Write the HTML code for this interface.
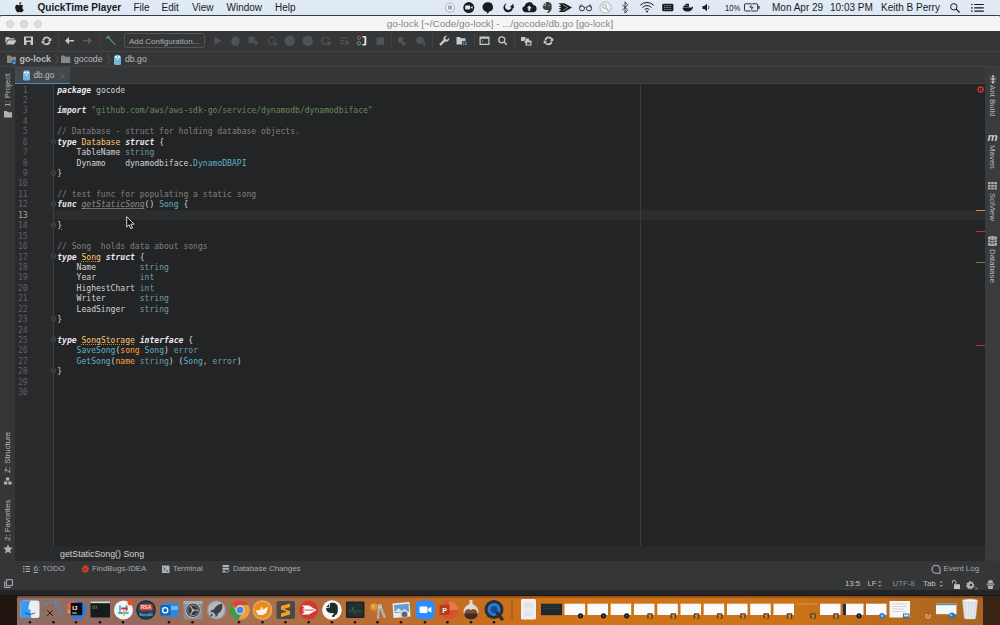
<!DOCTYPE html>
<html>
<head>
<meta charset="utf-8">
<title>go-lock</title>
<style>
*{box-sizing:border-box;margin:0;padding:0}
html,body{width:1000px;height:625px;overflow:hidden;background:#2a1a12;font-family:"Liberation Sans",sans-serif;}
.abs{position:absolute}
#root{position:relative;width:1000px;height:625px;overflow:hidden;background:#2a1a12}
/* mac menu bar */
#menubar{left:0;top:0;width:1000px;height:15px;background:linear-gradient(#e2ecf6,#dce8f3);color:#1a1a1a;font-size:10px;line-height:15px;white-space:nowrap}
#menubar span{position:absolute;top:0}
/* window */
#win{left:0;top:15px;width:1000px;height:575px;background:#343638;border-radius:3px 3px 4px 4px;overflow:hidden}
#titlebar{left:0;top:0;width:1000px;height:16px;background:#f5f5f5;border-top:1px solid #3a3a3a;color:#858585;font-size:9.9px;line-height:16px;text-align:center}
.tl{position:absolute;top:3.5px;width:8px;height:8px;border-radius:50%;background:#dcdcdc;border:0.5px solid #d0d0d0}
#toolbar{left:0;top:16px;width:1000px;height:21px;background:#343638;border-bottom:1px solid #3f4143}
#navbar{left:0;top:37px;width:1000px;height:15px;background:#343638;color:#bbbbbb;font-size:8.7px;line-height:14px;white-space:nowrap}
#tabbar{left:14px;top:51px;width:972px;height:18px;background:#343638;border-top:1px solid #3f4143;border-bottom:1px solid #3f4143}
#tab{left:0;top:0;width:56px;height:16.5px;background:#45484a;border-bottom:1.5px solid #4a88c7;color:#bbbbbb;font-size:8.3px;line-height:17px}
#leftbar{left:0;top:51px;width:15px;height:510px;background:#343638;border-top:1px solid #3f4143}
#rightbar{left:985px;top:51px;width:15px;height:510px;background:#393b3d;border-top:1px solid #3f4143}
.vlabel{position:absolute;color:#bbbbbb;font-size:7.9px;white-space:nowrap;line-height:10px;height:10px}
.vl{transform-origin:0 0;transform:rotate(-90deg)}
.vr{transform-origin:0 0;transform:rotate(90deg)}
/* editor */
#editor{left:15px;top:68.5px;width:970px;height:462.5px;background:#232425}
#gutter{left:0;top:0;width:39px;height:463px;background:#292a2c;border-right:1px solid #3d3e40}
#code{left:42.2px;top:2.0px;font-family:"DejaVu Sans Mono","Liberation Mono",monospace;font-size:8.07px;line-height:10.43px;color:#d0d4d8;white-space:pre}
#lnums{left:0;top:2.0px;width:12.6px;text-align:right;font-family:"DejaVu Sans Mono","Liberation Mono",monospace;font-size:8.07px;line-height:10.43px;color:#5e6164;white-space:pre}
.k{font-weight:bold;font-style:italic;color:#ebe4f2}
.s{color:#6a8759}
.c{color:#808080}
.t{color:#6d9caa}
.t2{color:#5fb0c8}
.m{color:#5fb0c8}
.e{text-decoration:underline dotted #e0452e;text-decoration-thickness:0.9px;text-underline-offset:0.8px}
.d{color:#ffc66d}
.f{color:#a9b7c6}
.p{color:#ffa040}
.u{font-style:italic;color:#8c8c8c;text-decoration:underline #707070;text-decoration-thickness:0.6px;text-underline-offset:1px}
.w{text-decoration:underline dotted #c08a30;text-decoration-thickness:0.9px;text-underline-offset:0.8px}
#curline{left:39px;top:126.0px;width:931px;height:10.4px;background:#2b2c2d}
#margin{left:625px;top:0;width:1px;height:463px;background:#3a3b3c}
/* bottom */
#crumb{left:15px;top:531px;width:970px;height:15px;background:#292a2c;color:#d0d0d0;font-size:8.86px;line-height:14px;padding-left:45px;padding-top:1px}
#toolwin{left:0;top:546px;width:1000px;height:15px;background:#343638;border-top:1px solid #343638;color:#a9abad;font-size:7.9px;line-height:14px;white-space:nowrap}
#toolwin span,#status span{position:absolute;top:0}
#status{left:0;top:561px;width:1000px;height:14px;background:#343638;border-top:1px solid #343638;color:#c2c4c6;font-size:7.8px;line-height:14px;white-space:nowrap}
/* dock */
#dock{left:17px;top:595.5px;width:965.5px;height:30px;background:#cc7218;border-radius:3px 3px 0 0;overflow:hidden}
.ic{position:absolute;top:3px;width:20px;height:20px;border-radius:4px}
.dot{position:absolute;top:26px;width:2px;height:2px;border-radius:50%;background:#1a1a1a}
</style>
</head>
<body>
<div id="root">
<div class="abs" style="left:0;top:588px;width:1000px;height:37px;background:#1a1412"></div>
<div class="abs" style="left:0;top:588px;width:1000px;height:6.500px;background:#242527"></div>
<div class="abs" style="left:0;top:596px;width:18px;height:29px;background:#21150f"></div>
<div class="abs" style="left:982px;top:596px;width:18px;height:29px;background:#3a2416"></div>

<div id="menubar" class="abs">
<svg class="abs" style="left:15px;top:2px" width="9" height="11" viewBox="0 0 18 22"><path fill="#1a1a1a" d="M12.6 0c.1 1.2-.4 2.400-1.100 3.300-.8.900-2 1.600-3.100 1.500-.1-1.200.5-2.400 1.100-3.100C10.300.800 11.600.100 12.600 0zM16.900 7.500c-.1.100-2.200 1.300-2.200 3.800 0 3 2.600 4 2.700 4-.0.100-.4 1.500-1.400 2.900-.9 1.300-1.800 2.500-3.200 2.500s-1.800-.8-3.400-.8c-1.600 0-2.100.8-3.400.8-1.400.1-2.400-1.300-3.300-2.600C.900 15.500-.4 11.000.8 8.100c.9-1.600 2.500-2.600 4.200-2.600 1.300 0 2.600.9 3.400.9.800 0 2.300-1.100 3.900-.9.700 0 2.500.3 3.700 2z"/></svg>
<span style="left:37.5px;font-weight:bold;font-size:10px">QuickTime Player</span>
<span style="left:133.5px">File</span>
<span style="left:161.5px">Edit</span>
<span style="left:192px">View</span>
<span style="left:226.5px">Window</span>
<span style="left:275px">Help</span>
<!-- status icons -->
<svg class="abs" style="left:440px;top:0" width="330" height="15" viewBox="440 0 330 15">
 <circle cx="450" cy="7.600" r="4.600" fill="#eef3f8" stroke="#a9adb2" stroke-width="0.900"/><rect x="448" y="5.600" width="4" height="4" rx="0.700" fill="#a4a8ad"/>
 <circle cx="468.800" cy="7.600" r="5.500" fill="#1c1c1e"/><rect x="465.200" y="5.600" width="5" height="4" rx="0.800" fill="#dfeaf4"/><path d="M470.600 7.600l2-1.500v3z" fill="#dfeaf4"/>
 <path d="M487.800 2.300a5 4.800 0 0 1 1.200 9.500c-.3 1-1.200 1.700-2.400 1.900.5-.6.600-1.200.5-1.800a5 4.800 0 0 1 .7-9.600z" fill="#1c1c1e"/>
 <path d="M505.85 3.43A4.7 4.7 0 1 0 512.88 7.09L511.6 6.6A3.3 3.3 0 1 1 506.65 3.74z" fill="#1c1c1e"/><path d="M509.9 7l3.300-3.200.9 4.500z" fill="#1c1c1e"/>
 <path d="M525.5 12.2a3.200 3.200 0 0 1-.7-6.300 4.500 4.500 0 0 1 8.600-1 3.700 3.700 0 0 1 .2 7.300z" fill="#1c1c1e"/><path d="M529.3 5.600l2.500 2.700h-1.500v2.400h-2V8.300h-1.500z" fill="#dfeaf4"/>
 <path d="M545.6 2.4C547 1.9 549.5 2 550.3 2.9C551.6 3.2 551.7 5 551.7 7C551.7 9.5 551.2 11.2 549.8 11.4C549.3 12.6 548.6 13.2 547.6 12.9C546.9 12.6 547.2 11.6 547.9 11.5C548.4 11.4 548.6 10.6 548.3 10C546 10.4 543.3 9.6 542.7 7.200C542.5 6.2 543 5.8 543.6 5.8L545 5.8C545.4 5.8 545.6 5.5 545.6 5z" fill="#3e4042"/><path d="M542.8 5.2L545 2.9V5.2z" fill="#3e4042"/><circle cx="549" cy="5.400" r="0.500" fill="#dfeaf4"/>
 <path d="M558.4 3.300h6l7.600 4.300-7.600 4.300h-6l3-2.150-3-.65 2.800-1.500-2.800-1.500 3-.65z" fill="#1c1c1e"/><path d="M563 4.600l4.600 3-4.600 3" fill="none" stroke="#dfeaf4" stroke-width="0.500"/>
 <circle cx="582" cy="8.400" r="2.500" fill="none" stroke="#1c1c1e" stroke-width="0.900"/><circle cx="589" cy="8.400" r="2.500" fill="none" stroke="#1c1c1e" stroke-width="0.900"/><path d="M584.500 7.800q1-.9 2 0M579.600 7.600l.9-2.600 1.200-.4M591.400 7.600l-.9-2.600-1.200-.4" fill="none" stroke="#1c1c1e" stroke-width="0.700"/>
 <circle cx="605.5" cy="7.600" r="5.600" fill="#eef3f7" stroke="#a9adb1" stroke-width="0.900"/><circle cx="604.3" cy="6.300" r="1.900" fill="none" stroke="#a4a8ac" stroke-width="0.900"/><path d="M605.7 7.800l3 3.100" stroke="#a4a8ac" stroke-width="1.100"/>
 <path d="M622.3 4.600l5.400 5.600-2.700 2.900V1.900l2.700 2.900-5.400 5.600" fill="none" stroke="#1c1c1e" stroke-width="0.800"/>
 <path d="M640.2 5.300a9.600 9.600 0 0 1 13.600 0M642.400 7.500a6.500 6.500 0 0 1 9.200 0M644.600 9.600a3.400 3.400 0 0 1 4.800 0" fill="none" stroke="#1c1c1e" stroke-width="1"/><circle cx="647" cy="11.500" r="1" fill="#1c1c1e"/>
 <rect x="662.200" y="3.800" width="11.200" height="7.400" rx="1.300" fill="#1c1c1e"/><path d="M664 5.500h7.600M664 7.500h7.600M664 9.500h7.600" stroke="#9aa0a6" stroke-width="0.800" stroke-dasharray="1 0.500"/>
 <path d="M682.500 7.500h8.500c.6-.1 1.300-.4 1.800-1 .4.300.4.800 0 1.400-.9 2.600-3 3.700-5.800 3.700-2.600 0-4.200-1.300-4.500-4.100z" fill="#1c1c1e"/><path d="M683.500 5.500h5.500v1.800h-5.500zM685.500 3.700h3.500v1.600h-3.500z" fill="#1c1c1e"/>
 <path d="M702.500 6h1.800l2.700-2.300v7.600l-2.700-2.300h-1.800z" fill="#1c1c1e"/><path d="M708.300 5.700q1.300 1.800 0 3.600" fill="none" stroke="#1c1c1e" stroke-width="0.800"/>
 <rect x="744.500" y="3.800" width="13.200" height="7.200" rx="1.200" fill="none" stroke="#1c1c1e" stroke-width="0.900"/><rect x="758.300" y="6" width="1.200" height="2.800" fill="#1c1c1e"/><path d="M752 3l-3 4.800h2.300l-.8 4.200 3.300-5.200h-2.300z" fill="#1c1c1e" stroke="#dfeaf4" stroke-width="0.500"/>
</svg>
<span style="left:724.500px;font-size:9.500px;transform:scaleX(0.8);transform-origin:0 50%">10%</span>
<span style="left:772px">Mon Apr 29</span>
<span style="left:830px">10:03 PM</span>
<span style="left:881px">Keith B Perry</span>
<svg class="abs" style="left:949px;top:2px" width="12" height="12" viewBox="0 0 12 12"><circle cx="4.800" cy="4.800" r="3.200" fill="none" stroke="#1a1a1a" stroke-width="1"/><path d="M7.200 7.200l3.300 3.300" stroke="#1a1a1a" stroke-width="1.200"/></svg>
<svg class="abs" style="left:971px;top:3px" width="13" height="10" viewBox="0 0 13 10"><path d="M0 1.500h1.600M3.300 1.500h9.500M0 4.800h1.600M3.300 4.800h9.500M0 8.100h1.600M3.300 8.100h9.500" stroke="#1a1a1a" stroke-width="1.200"/></svg>
</div>

<div id="win" class="abs">
<div id="titlebar" class="abs"><div class="tl" style="left:5.500px"></div><div class="tl" style="left:19.500px"></div><div class="tl" style="left:33.500px"></div>go-lock [~/Code/go-lock] - .../gocode/db.go [go-lock]</div>
<div id="toolbar" class="abs">
<svg class="abs" style="left:0;top:-0.700px" width="600" height="20" viewBox="0 0 600 20">
 <g fill="#c6c8ca" stroke="none">
  <!-- open folder -->
  <path d="M5.500 7h3.500l1 1.200h4.500v1.300H8l-2.500 4z"/><path d="M8.500 10.200h8l-2.600 4.300H5.800z"/>
  <!-- save -->
  <path d="M24 6.500h9v8.500h-9z M26 7.800v2.700h5V7.800z M26.500 12v3h4v-3z" fill-rule="evenodd"/>
  <!-- refresh -->
  <path d="M46.500 6.500a4.300 4.300 0 0 1 3.800 2.200l1-1v3.300h-3.300l1.200-1.200a2.700 2.700 0 0 0-5 .4h-1.700a4.300 4.300 0 0 1 4-3.700z M46.500 15.300a4.300 4.300 0 0 1-3.800-2.200l-1 1v-3.300H45l-1.200 1.200a2.700 2.700 0 0 0 5-.4h1.700a4.300 4.300 0 0 1-4 3.700z"/>
  <!-- back -->
  <path d="M65 10.800l4-3.800v3h5v1.600h-5v3z"/>
  <!-- wrench -->
  <path d="M447.300 5.800a3.100 3.100 0 0 0-3.800 4l-4.300 4.400 1.600 1.600 4.400-4.300a3.100 3.100 0 0 0 4-3.800l-2 2-1.600-.5-.4-1.500z"/>
  <!-- project structure -->
  <path d="M456.500 7h3.300l1 1.200h4.700v6.300h-9z"/><path d="M462 11h5v4.500h-5z" fill="#343638"/><path d="M462.800 11.700h1.500v1.300h-1.500zM465 11.700h1.500v1.300H465zM462.800 13.600h1.500v1.300h-1.500zM465 13.600h1.500v1.300H465z" fill="#4a9ee0"/>
  <!-- terminal window -->
  <path d="M479.500 6.500h10v8.500h-10z M480.700 8.800v5h7.600v-5z" fill-rule="evenodd"/><path d="M481.500 9.800l1.500 1.200-1.500 1.200" stroke="#6fae6b" stroke-width="0.700" fill="none"/>
  <!-- vcs -->
  <path d="M521 7h4.500v4H521z M526 8.500h3v2h2.500v5h-6v-3h-1v-2.500h1.500z M527 12.500v2h3.300v-2z" fill-rule="evenodd"/>
  <!-- refresh2 -->
  <path d="M548.500 6.500a4.300 4.300 0 0 1 3.800 2.200l1-1v3.300H550l1.200-1.200a2.700 2.700 0 0 0-5 .4h-1.700a4.300 4.300 0 0 1 4-3.700z M548.500 15.300a4.300 4.300 0 0 1-3.800-2.200l-1 1v-3.300h3.300l-1.200 1.200a2.700 2.700 0 0 0 5-.4h1.700a4.300 4.300 0 0 1-4 3.700z"/>
 </g>
 <!-- search -->
 <circle cx="501.800" cy="9.800" r="3" fill="none" stroke="#c6c8ca" stroke-width="1.300"/><path d="M504 12l2.800 2.800" stroke="#c6c8ca" stroke-width="1.500"/>
 <!-- forward dim -->
 <path d="M92 10.800l-4-3.800v3h-5v1.600h5v3z" fill="#585b5d"/>
 <!-- hammer -->
 <path d="M105.500 7.800l3-2.300 1.800 1.300-.9.700 6.300 7-1 .8-6.300-7-.9.700z" fill="#4a9472"/>
 <!-- separators -->
 <path d="M58.500 4v13M99.500 4v13M391.500 4v13M432.500 4v13M474.500 4v13M514.500 4v13M537.500 4v13" stroke="#404244" stroke-width="1"/>
 <!-- config box -->
 <rect x="124.500" y="3.500" width="80" height="14" rx="2" fill="none" stroke="#525456" stroke-width="1"/>
 <!-- dim icons -->
 <g fill="#505355">
  <path d="M214.500 6.500l7 4.300-7 4.300z"/>
  <path d="M232 9.500a3.500 3 0 0 1 7 0v4a3.500 2.500 0 0 1-7 0z M233.500 6.500h4v2h-4z M230.500 9.500h10v1h-10zM230.500 12h10v1h-10z"/>
  <path d="M248.500 6.500h6v6.500h-6z M255 10l4 2.800-4 2.800z"/>
  <path d="M272 6.500a4.300 4.300 0 1 0 1 8.500l-.5-1.300a3 3 0 1 1 2.500-2.700h1.300a4.300 4.300 0 0 0-4.300-4.500z M272.500 9.500l5 5.500-2 .2-1 1.600z"/>
  <circle cx="289.700" cy="10.800" r="5.200"/>
  <circle cx="307.700" cy="10.800" r="5.200"/>
  <path d="M325.500 6.500a4.300 4.300 0 1 0 1.500 8.300v-1.500a3 3 0 1 1 1.500-3.500h1.300a4.300 4.300 0 0 0-4.300-3.300z M327.500 10.500l4.500 2.700-4.500 2.700z"/>
  <path d="M340 7h8v1.200h-8zM340 10h4.500v1.200H340zM340 13h4.500v1.200H340zM345.500 10l4.300 2.700-4.300 2.700z"/>
  <path d="M376.500 7.300h7.500v7.500h-7.500z"/>
  <path d="M398 7h5v6h-5zM402 12h3.500v3.500H402z M404 10.500l3 2"/>
  <path d="M420 6.500a3.800 3.800 0 1 0 .1 7.600 3.800 3.800 0 0 0-.1-7.600z M423.500 11.500h1.500v3h1.500l-2.200 2.200-2.200-2.200h1.400z"/>
 </g>
 <!-- attach icon -->
 <circle cx="359" cy="7.800" r="1.600" fill="none" stroke="#d25252" stroke-width="0.900"/><circle cx="359" cy="13.300" r="1.700" fill="none" stroke="#59a869" stroke-width="0.900"/>
 <path d="M362.500 6h2.500a1.300 1.300 0 0 1 1.300 1.300v7a1.300 1.300 0 0 1-1.300 1.300h-2.500v-1.500h2v-6.600h-2z" fill="#e8e8e8"/>
</svg>
<div class="abs" style="left:129px;top:3.500px;font-size:7.950px;line-height:14px;color:#adafb1;white-space:nowrap">Add Configuration...</div>
</div>
<div id="navbar" class="abs">
 <svg class="abs" style="left:0;top:0" width="160" height="15" viewBox="0 0 160 15">
  <path d="M7 3.500h3.300l1 1.200h4.700v6.300H7z" fill="#84888b"/><rect x="12" y="8.500" width="4" height="4" fill="#343638"/><rect x="12.700" y="9.200" width="3" height="3" fill="#3d9be9"/>
  <path d="M61 3.500h3.300l1 1.200h5v6.300H61z" fill="#84888b"/>
  <path d="M55 2l3 5.500-3 5.500M107 2l3 5.500-3 5.500" fill="none" stroke="#55585a" stroke-width="0.800"/>
  <g transform="translate(114,2.500)"><path d="M3.500 0.300a3.500 3.200 0 0 1 3.500 3.200v5.500a1.500 1.500 0 0 1-1.500 1.500h-4a1.500 1.500 0 0 1-1.500-1.500v-5.500a3.500 3.200 0 0 1 3.500-3.200z" fill="#74b4dc"/><circle cx="2" cy="2.500" r="1.100" fill="#fff"/><circle cx="5" cy="2.500" r="1.100" fill="#fff"/><rect x="2.700" y="4" width="1.600" height="1.500" fill="#eee"/></g>
 </svg>
 <span class="abs" style="left:19.500px;top:0;font-weight:bold;font-size:8.900px">go-lock</span>
 <span class="abs" style="left:74px;top:0">gocode</span>
 <span class="abs" style="left:125px;top:0">db.go</span>
</div>
<div id="tabbar" class="abs">
 <div id="tab" class="abs">
  <svg class="abs" style="left:8.500px;top:3px" width="7" height="11" viewBox="0 0 7 11"><path d="M3.500 0.300a3.500 3.200 0 0 1 3.500 3.200v5.500a1.500 1.500 0 0 1-1.500 1.500h-4a1.500 1.500 0 0 1-1.500-1.500v-5.500a3.500 3.200 0 0 1 3.500-3.200z" fill="#74b4dc"/><circle cx="2" cy="2.500" r="1.100" fill="#fff"/><circle cx="5" cy="2.500" r="1.100" fill="#fff"/><rect x="2.700" y="4" width="1.600" height="1.500" fill="#eee"/></svg>
  <span class="abs" style="left:19.500px;top:0">db.go</span>
  <svg class="abs" style="left:46px;top:6.500px" width="5" height="5" viewBox="0 0 5 5"><path d="M0.500 0.500l4 4M4.500 0.500l-4 4" stroke="#6e7173" stroke-width="0.800"/></svg>
 </div>
</div>
<div id="editor" class="abs">
 <div id="curline" class="abs"></div>
 <div id="margin" class="abs"></div>
 <div id="gutter" class="abs"></div>
 <div id="lnums" class="abs">1
2
3
4
5
6
7
8
9
10
11
12
<span style="color:#a6a8aa">13</span>
14
15
16
17
18
19
20
21
22
23
24
25
26
27
28
29
30</div>
 <div id="code" class="abs"><span class="k">package</span> gocode

<span class="k">import</span> <span class="s">"github.com/aws/aws-sdk-go/service/dynamodb/dynamodbiface"</span>

<span class="c">// Database - struct for holding database objects.</span>
<span class="k">type</span> <span class="d">Database</span> <span class="k">struct</span> {
    TableName <span class="t">string</span>
    Dynamo    dynamodbiface.<span class="t2">DynamoDBAPI</span>
}

<span class="c">// test func for populating a static song</span>
<span class="k">func</span> <span class="u">getStaticSong</span>() <span class="t2">Song</span> {

<span class="e">}</span>

<span class="c">// Song  holds data about songs</span>
<span class="k">type</span> <span class="d w">Song</span> <span class="k">struct</span> {
    Name         <span class="t">string</span>
    Year         <span class="t">int</span>
    HighestChart <span class="t">int</span>
    Writer       <span class="t">string</span>
    LeadSinger   <span class="t">string</span>
}

<span class="k">type</span> <span class="d w">SongStorage</span> <span class="k">interface</span> {
    <span class="m">SaveSong</span>(<span class="p">song</span> <span class="t2">Song</span>) <span class="t">error</span>
    <span class="m">GetSong</span>(<span class="p">name</span> <span class="t">string</span>) (<span class="t2">Song</span><span class="p">,</span> <span class="t">error</span>)
}
</div>
 <svg class="abs" style="left:33.700px;top:-1.200px" width="10" height="320" viewBox="0 0 10 320">
  <g fill="#232425" stroke="#53565a" stroke-width="0.700"><circle cx="4.500" cy="59.8" r="2.300"/><circle cx="4.500" cy="91.0" r="2.300"/><circle cx="4.500" cy="122.2" r="2.300"/><circle cx="4.500" cy="143.0" r="2.300"/><circle cx="4.500" cy="174.2" r="2.300"/><circle cx="4.500" cy="236.6" r="2.300"/><circle cx="4.500" cy="257.4" r="2.300"/><circle cx="4.500" cy="288.6" r="2.300"/></g>
  <path d="M3.300 59.8h2.400M3.300 91.0h2.400M3.300 122.2h2.400M3.300 143.0h2.400M3.300 174.2h2.400M3.300 236.6h2.400M3.300 257.4h2.400M3.300 288.6h2.400" stroke="#7a7d80" stroke-width="0.600"/>
 </svg>
 <!-- error stripe marks -->
 <div class="abs" style="left:960.5px;top:126.2px;width:9.5px;height:1.5px;background:#d9891f"></div>
 <div class="abs" style="left:960.5px;top:147.4px;width:9.5px;height:1.2px;background:#b03a2a"></div>
 <div class="abs" style="left:960.5px;top:178.6px;width:9.5px;height:1.2px;background:#85735a"></div>
 <div class="abs" style="left:960.5px;top:261.5px;width:9.5px;height:1.2px;background:#b03a2a"></div>
 <svg class="abs" style="left:961.500px;top:2.500px" width="7" height="7" viewBox="0 0 7 7"><circle cx="3.500" cy="3.500" r="2.600" fill="none" stroke="#d8402c" stroke-width="1.300"/><circle cx="3.500" cy="3.500" r="0.800" fill="#d8402c"/></svg>
 <!-- mouse pointer -->
 <svg class="abs" style="left:111px;top:132.500px" width="10" height="14" viewBox="0 0 10 14"><path d="M0.700 0.700v10.300l2.400-2.200 1.700 3.900 1.700-.7-1.700-3.800h3.300z" fill="#111" stroke="#e8e8e8" stroke-width="0.900" stroke-linejoin="round"/></svg>
</div>

<div id="leftbar" class="abs">
 <div class="vlabel vl" style="left:2.500px;top:39.500px">1: Project</div>
 <svg class="abs" style="left:3.500px;top:43.600px" width="8" height="7" viewBox="0 0 8 7"><path d="M0 0h3l1 1.200h4v5.300H0z" fill="#afb1b3"/></svg>
 <div class="vlabel vl" style="left:2.500px;top:406.300px">Z: Structure</div>
 <svg class="abs" style="left:3.500px;top:409.700px" width="8" height="8" viewBox="0 0 8 8"><path d="M0 4.500h3.300v3H0zM4.300 4.500h3.300v3H4.300zM2 0.500h3.300v3H2z" fill="#afb1b3"/></svg>
 <div class="vlabel vl" style="left:2.500px;top:474px">2: Favorites</div>
 <svg class="abs" style="left:2.500px;top:476.500px" width="10" height="10" viewBox="0 0 10 10"><path d="M5 0.300l1.400 3.200 3.400.3-2.600 2.300.8 3.400L5 7.700 2 9.500l.8-3.400L.2 3.800l3.400-.3z" fill="#afb1b3"/></svg>
</div>
<div id="rightbar" class="abs">
 <svg class="abs" style="left:3.500px;top:7.500px" width="8" height="9" viewBox="0 0 8 9"><path d="M3 0.300h2v1.700h-2zM2.500 2.500h3v2.500h-3zM2.800 5.500h2.400v3h-2.400z" fill="#b9bbbd"/><path d="M0.800 1.500l1.700 1.500M7.200 1.500l-1.700 1.500M0.500 4h2M7.500 4h-2M0.800 7.500l1.700-1.500M7.200 7.500l-1.700-1.500" fill="none" stroke="#a4a6a8" stroke-width="0.600"/></svg>
 <div class="vlabel vr" style="left:11.500px;top:18px">Ant Build</div>
 <div class="abs" style="left:2.500px;top:64.500px;width:10px;font-size:11.500px;line-height:10px;font-weight:bold;font-style:italic;color:#c8c8c8">m</div>
 <div class="vlabel vr" style="left:11.500px;top:78px">Maven</div>
 <svg class="abs" style="left:2.500px;top:115px" width="9" height="8" viewBox="0 0 9 8"><path d="M0 0h2.500v2H0zM3.200 0h2.500v2H3.200zM6.400 0h2.500v2H6.400zM0 2.800h2.500v2H0zM3.200 2.800h2.500v2H3.200zM6.400 2.800h2.500v2H6.400zM0 5.600h2.500v2H0zM3.200 5.600h2.500v2H3.200zM6.400 5.600h2.500v2H6.400z" fill="#afb1b3"/></svg>
 <div class="vlabel vr" style="left:11.500px;top:126px">SciView</div>
 <svg class="abs" style="left:2.500px;top:169px" width="9" height="10" viewBox="0 0 9 10"><path d="M0 1.500a4.500 1.500 0 0 1 9 0v7a4.500 1.500 0 0 1-9 0z" fill="#afb1b3"/><path d="M0 3.800q4.500 1.800 9 0M0 6.300q4.500 1.800 9 0" fill="none" stroke="#343638" stroke-width="0.800"/><path d="M3 1v8.500M6 1v8.500" stroke="#343638" stroke-width="0.500"/></svg>
 <div class="vlabel vr" style="left:11.500px;top:182px">Database</div>
</div>

<div id="crumb" class="abs">getStaticSong() Song</div>
<div id="toolwin" class="abs">
 <svg class="abs" style="left:0;top:0" width="1000" height="15" viewBox="0 0 1000 15">
  <path d="M23 4.500h1.500M25.500 4.500h4.500M23 7h1.500M25.500 7h4.500M23 9.500h1.500M25.500 9.500h4.500" stroke="#afb1b3" stroke-width="1.200"/>
  <path d="M83 5l2-2 2.500 1 1.500 2.500-1 3-3 1.500-2.500-1.500-1-2.500z" fill="#cc3c28"/><path d="M84 6.500l2 1.500" stroke="#5a140c" stroke-width="0.800"/>
  <path d="M162 3.500h7.500v7.500H162z" fill="#afb1b3"/><path d="M163.500 5.500l1.800 1.500-1.800 1.500M166 9h2" stroke="#343638" stroke-width="0.800" fill="none"/>
  <path d="M222.500 3h6.500v2h-6.500zM222.500 5.800h6.500v2h-6.500zM222.500 8.600h3v2h-3z" fill="#afb1b3"/><path d="M226 9.500l1.200 1.300 2.300-2.600" stroke="#afb1b3" stroke-width="0.900" fill="none"/>
  <path d="M936 3.200a4 4 0 0 1 4 4v4h-4a4 4 0 0 1 0-8z" fill="none" stroke="#afb1b3" stroke-width="1.100"/>
 </svg>
 <span style="left:33.500px"><u>6</u>: TODO</span>
 <span style="left:92px">FindBugs-IDEA</span>
 <span style="left:173px">Terminal</span>
 <span style="left:233px">Database Changes</span>
 <span style="left:943.500px">Event Log</span>
</div>
<div id="status" class="abs">
 <svg class="abs" style="left:0;top:0" width="1000" height="15" viewBox="0 0 1000 15">
  <path d="M6.400 2.700h6v6h-6z M4.700 4.400v6h6" fill="none" stroke="#b4b6b8" stroke-width="1"/>
  <path d="M878 5.500l1.800-1.800 1.800 1.800zM878 8l1.800 1.800 1.800-1.800z" fill="#9a9da0"/>
  <path d="M939.500 5.500l1.800-1.800 1.800 1.800zM939.500 8l1.800 1.800 1.800-1.800z" fill="#9a9da0"/>
  <path d="M954 7.300h6v4.700h-6z" fill="#c0c2c4"/><path d="M955.800 7.300V5a1.700 1.700 0 0 0-3.400 0v1.300" fill="none" stroke="#c0c2c4" stroke-width="0.900"/>
  <path d="M970 3.500l1 1.500 1.800-.3.300 1.800 1.500 1-1 1.500.3 1.700-1.800.3-1 1.500-1.500-1-1.700.5-.5-1.800-1.500-1 1-1.500-.3-1.800 1.800-.3z" fill="#afb1b3"/><circle cx="971" cy="8" r="1.300" fill="#343638"/><path d="M975 9.500l2 2-2 2" stroke="#afb1b3" stroke-width="0.800" fill="none"/>
  <path d="M988 5a2.500 2 0 0 1 5 0v1h-5zM986.500 6.500h8v1.200h-8zM987.500 8.500h6l-1 3.500h-4z" fill="#afb1b3"/>
 </svg>
 <span style="left:845px">13:5</span>
 <span style="left:867.500px">LF</span>
 <span style="left:892.500px;color:#8a8d8f">UTF-8</span>
 <span style="left:923px">Tab</span>
</div>

</div>

<div id="dock" class="abs">
<div class="abs" style="left:0;top:0;width:965.5px;height:30px;background:linear-gradient(90deg,#8e6e64 0,#95695c 11.7%,#a87052 24%,#b96c32 36%,#c76e1e 48%,#cf7418 56%,#cc7218 81%,#b86a1e 91%,#a86422 100%)"></div>
<div class="abs" style="left:0;top:0;width:967px;height:2px;background:rgba(60,30,10,0.35)"></div>
<svg class="abs" style="left:0;top:0.5px" width="967" height="29" viewBox="17 596 967 29">
<rect x="20.500" y="600.500" width="19" height="17.500" rx="2.500" fill="#e8eef4"/><path d="M20.500 603a2.500 2.500 0 0 1 2.500-2.500h7.500c-1.500 3-2 6-2 9h2c0 3 .3 6 .8 8.500H23a2.500 2.500 0 0 1-2.500-2.500z" fill="#3a9af0"/><path d="M25 613q5 3 10 0" stroke="#1a3a6a" stroke-width="0.800" fill="none"/>
<g fill="#3f8fe0"><circle cx="46" cy="604" r="1.300"/><circle cx="50" cy="602" r="1.300"/><circle cx="55" cy="602.500" r="1.300"/><circle cx="59" cy="605" r="1.300"/><circle cx="60.500" cy="609.500" r="1.500"/><circle cx="59" cy="614" r="1.300"/><circle cx="56" cy="606.500" r="1.200"/></g><path d="M47 610l6 6M53 610l-6 6" stroke="#222" stroke-width="1"/>
<path d="M67 604l7-4 6 1 6.500 4-1 9-4 5-6 .5-6-5z" fill="#2f7ae5"/><path d="M67 604l6.500-3.500 3 1-1 8-7 2z" fill="#f0603a"/><path d="M67.500 609l3 2v3l-2.500-1z" fill="#f49a2a"/><rect x="70.800" y="602.800" width="11.500" height="12.400" fill="#0c0c0e"/><rect x="72.300" y="612.600" width="4.500" height="0.900" fill="#fff"/>
<text x="72.300" y="610" font-family="Liberation Sans, sans-serif" font-weight="bold" font-size="6" fill="#fff">IJ</text>
<rect x="90.500" y="601.300" width="19.500" height="16.200" rx="1" fill="#141c1e"/><rect x="90.500" y="601.300" width="19.500" height="1.900" fill="#d4d6d4"/><path d="M92.500 605.500q1.200 1.700 0 3.400M94.300 605.500q1.200 1.700 0 3.400M96.100 605.500q1.200 1.700 0 3.400" stroke="#8a9a4a" stroke-width="0.700" fill="none"/>
<circle cx="123.500" cy="610" r="9.500" fill="#f4f4f4"/><path d="M120 606v5M123 613h5" stroke="#36c5f0" stroke-width="1.800" stroke-linecap="round"/><path d="M126.500 606v4.500M119 613h3" stroke="#2eb67d" stroke-width="1.800" stroke-linecap="round"/><path d="M122 608.500h5" stroke="#e01e5a" stroke-width="1.800" stroke-linecap="round"/><path d="M124 611v4" stroke="#ecb22e" stroke-width="1.800" stroke-linecap="round"/><circle cx="130.500" cy="602.500" r="3" fill="#e8502a"/>
<circle cx="146" cy="610" r="9.800" fill="#14283a"/><circle cx="146" cy="610" r="8.500" fill="#1d4660"/><rect x="139.500" y="604" width="13" height="6.500" rx="1" fill="#d8402c"/>
<text x="146" y="609.300" text-anchor="middle" font-family="Liberation Sans, sans-serif" font-weight="bold" font-size="5" fill="#f4e0d8">RSA</text><text x="146" y="615.800" text-anchor="middle" font-family="Liberation Sans, sans-serif" font-size="3.800" fill="#c8d4dc">SecurID</text>
<rect x="164" y="603" width="14.500" height="14" rx="1.500" fill="#2a8ae0"/><rect x="160" y="605" width="10.500" height="10.500" rx="1.200" fill="#1565c0"/><circle cx="165.200" cy="610.200" r="2.600" fill="none" stroke="#fff" stroke-width="1.300"/><path d="M171 606h7v4h-7z" fill="#6ab8f4"/>
<rect x="183.500" y="601" width="19" height="18.500" rx="1.500" fill="#8a8e93"/><rect x="183.500" y="601" width="19" height="3" fill="#a9adb2"/><circle cx="193" cy="610.300" r="7.300" fill="#34373b" stroke="#b9bcc0" stroke-width="1.100"/><circle cx="193" cy="610.300" r="5.300" fill="none" stroke="#8e9296" stroke-width="1"/><circle cx="193" cy="610.300" r="1.300" fill="#b4b8bc"/><path d="M193 610.300l5 0M193 610.300l-2.500-4.400M193 610.300l-2.500 4.400" stroke="#b4b8bc" stroke-width="1.100"/>
<circle cx="216.500" cy="610" r="9.800" fill="#8e9298"/><circle cx="216.500" cy="610" r="8.400" fill="#b4b8be"/><path d="M222 603.800c-3.600 0-6.400 2.400-8.200 5.800l-2.400.6-1.200 2 2.600-.2 2.700 2.700-.2 2.600 2-1.200.6-2.400c3.400-1.800 5.200-5.300 4.100-9.900z" fill="#3c4046"/><path d="M211.500 613.500l-1.500 3.200 3.200-1.500z" fill="#3c4046"/>
<circle cx="240" cy="610" r="9.800" fill="#e9a23b"/><path d="M240 600.200a9.800 9.800 0 0 1 8.500 4.900H240a4.900 4.900 0 0 0-4.600 3.200l-3.800-4.400a9.800 9.800 0 0 1 8.400-3.700z" fill="#db4437"/><path d="M231.600 603.900l4 6.900a4.900 4.900 0 0 0 5.400 4l-2.500 4.900a9.800 9.800 0 0 1-6.900-15.800z" fill="#3d9a4e"/><circle cx="240" cy="610" r="4.400" fill="#f4f4f4"/><circle cx="240" cy="610" r="3.500" fill="#4285f4"/>
<circle cx="262.500" cy="610" r="9.800" fill="#f0b060"/><circle cx="262.500" cy="610" r="8.600" fill="#e88c22"/><path d="M255.500 610.500l4.500-.5 1.500-3.500 2 3 4.500-3-1.500 6-3.500 2.500h-4.500z" fill="#fff6e8"/><path d="M261.500 606.500l2 3-3.500 .5z" fill="#f4d8b0"/>
<rect x="276.500" y="601" width="18.500" height="18" rx="2" fill="#4a4a4a"/><path d="M281 606l9-2.500v3.500l-6 2 6 2v3.500l-9 2.500v-3.500l6-2-6-2z" fill="#ff9a1f"/>
<circle cx="308.700" cy="610" r="9.800" fill="#d8463a"/><circle cx="308.700" cy="610" r="8.800" fill="#cc3a30"/><path d="M301.500 605.500h7.500l7.500 4.500-7.500 4.500h-7.500l3.500-2.500-3-1 3.500-1-3.500-1 3-1z" fill="#fff"/><path d="M305 610h9" stroke="#cc3a30" stroke-width="0.900"/>
<circle cx="332" cy="610" r="9.800" fill="#f8f8f8"/><g transform="translate(332 610) scale(1.300) translate(-547.200 -7.600)"><path d="M545.600 2.400C547 1.900 549.500 2 550.300 2.900C551.600 3.200 551.700 5 551.700 7C551.700 9.500 551.200 11.200 549.800 11.400C549.300 12.600 548.600 13.200 547.600 12.900C546.900 12.600 547.200 11.600 547.900 11.500C548.400 11.400 548.600 10.600 548.300 10C546 10.400 543.300 9.600 542.700 7.200C542.500 6.200 543 5.800 543.600 5.800L545 5.800C545.400 5.800 545.600 5.500 545.600 5z" fill="#1f2d2a"/><path d="M542.800 5.200L545 2.900V5.200z" fill="#1f2d2a"/></g>
<rect x="346" y="601.500" width="18.500" height="16.500" rx="1.200" fill="#1c2226"/><rect x="347.500" y="603" width="15.500" height="13.500" fill="#232e2e"/><path d="M348 611h4l1-4 1.500 7 1.200-3h6.500" stroke="#3e7a58" stroke-width="0.600" fill="none"/><path d="M351 603v13.500M355 603v13.500M359 603v13.500M347.500 607h15.500M347.500 613h15.500" stroke="#2e3c3c" stroke-width="0.400"/>
<path d="M377.500 603l1.500 4" stroke="#8a6a4a" stroke-width="0.700"/><circle cx="374" cy="607" r="3.800" fill="#e8902a"/><circle cx="373.300" cy="606.300" r="1.300" fill="#f4b860"/><path d="M379 606.500l-1 11.500M380.500 606.500l4 10.500" stroke="#b4b8bc" stroke-width="2.200" stroke-linecap="round"/><path d="M377 614h2.500M383 613l2-1" stroke="#8e9296" stroke-width="0.800"/><circle cx="379.800" cy="606" r="1.600" fill="none" stroke="#d4d8dc" stroke-width="0.900"/>
<path d="M392.500 603.500l17-1.500 1 14.500-17 1.500z" fill="#e8ecf0"/><path d="M394 605l14.500-1.200.6 8-14.500 1.200z" fill="#6a9ac8"/><path d="M394.500 612l4-4 3 3 3-2 4 3z" fill="#d8e4f0"/><circle cx="404.500" cy="614.500" r="3.200" fill="#5a5e66" stroke="#c8ccd0" stroke-width="0.800"/>
<rect x="415.500" y="600.500" width="19" height="19" rx="5" fill="#2d8cff"/><rect x="419.500" y="606.500" width="8" height="6.500" rx="1.200" fill="#fff"/><path d="M428 609l3.300-2.200v6l-3.300-2.200z" fill="#fff"/>
<circle cx="449" cy="610" r="9.300" fill="#d8502c"/><path d="M449 600.700a9.300 9.300 0 0 1 9.300 9.300H449z" fill="#e8784c"/><rect x="439.500" y="605" width="10" height="10" rx="1.200" fill="#b83a1c"/>
<text x="444.500" y="613" text-anchor="middle" font-family="Liberation Sans, sans-serif" font-weight="bold" font-size="7" fill="#fff">P</text>
<path d="M469.500 600h3v4c3 1 6 4 6 8a7.500 7 0 0 1-15 0c0-4 3-7 6-8z" fill="#d8dce0"/><path d="M464.500 612a6.500 6 0 0 0 13 0c-2-3-4-4-6.500-2-2.500-2-4.500-1-6.500 2z" fill="#8a4a2a"/><path d="M464 613.500a7 6 0 0 0 14 0z" fill="#3a2a28"/>
<circle cx="494" cy="609.500" r="9.500" fill="#2a2e34"/><circle cx="494" cy="609.500" r="6.500" fill="#2a7ad8"/><circle cx="494" cy="609.500" r="3.500" fill="#184a90"/><path d="M497 613l5 6" stroke="#2a2e34" stroke-width="3.500" stroke-linecap="round"/>
<path d="M512 600v19.500" stroke="#8a4a14" stroke-width="0.800"/>
<rect x="521" y="599" width="15" height="20.500" rx="1.500" fill="#f0f0f2"/><rect x="523.500" y="602.500" width="10" height="6" fill="#dfe3ea"/><rect x="523.500" y="610.500" width="10" height="6" fill="#e4e6ea"/>
<rect x="541" y="603.700" width="21" height="11.500" fill="#1e2a30"/><path d="M543 606h17M543 608.500h17" stroke="#2e4048" stroke-width="0.800"/>
<rect x="564.5" y="603.700" width="20.500" height="11.300" fill="#fbfbfb"/>
<circle cx="580.5" cy="615.800" r="2.600" fill="#16181c"/><circle cx="580.5" cy="615.800" r="1" fill="#4a6a9a"/>
<rect x="587.5" y="603.700" width="20.500" height="11.300" fill="#fbfbfb"/>
<circle cx="603.5" cy="615.800" r="2.600" fill="#16181c"/><circle cx="603.5" cy="615.800" r="1" fill="#4a6a9a"/>
<rect x="610.7" y="603.700" width="20.500" height="11.300" fill="#fbfbfb"/>
<circle cx="626.7" cy="615.800" r="2.600" fill="#16181c"/><circle cx="626.7" cy="615.800" r="1" fill="#4a6a9a"/>
<rect x="634" y="603.700" width="20.500" height="11.300" fill="#fbfbfb"/>
<rect x="647.2" y="613.200" width="5.600" height="5.600" rx="0.800" fill="#4a4030"/><path d="M648.5 615l3-1v1.200l-2 .7 2 .7v1.200l-3 1v-1.200l2-.7-2-.7z" fill="#ff9a1f"/>
<rect x="657.3" y="603.700" width="20.500" height="11.300" fill="#fbfbfb"/>
<rect x="670.5" y="613.200" width="5.600" height="5.600" rx="0.800" fill="#4a4030"/><path d="M671.8 615l3-1v1.200l-2 .7 2 .7v1.200l-3 1v-1.200l2-.7-2-.7z" fill="#ff9a1f"/>
<rect x="680.5" y="603.700" width="20.500" height="11.300" fill="#fbfbfb"/>
<rect x="693.7" y="613.200" width="5.600" height="5.600" rx="0.800" fill="#4a4030"/><path d="M695.0 615l3-1v1.200l-2 .7 2 .7v1.200l-3 1v-1.200l2-.7-2-.7z" fill="#ff9a1f"/>
<rect x="703.7" y="603.700" width="20.500" height="11.300" fill="#fbfbfb"/>
<rect x="716.9000000000001" y="613.200" width="5.600" height="5.600" rx="0.800" fill="#4a4030"/><path d="M718.2 615l3-1v1.200l-2 .7 2 .7v1.200l-3 1v-1.200l2-.7-2-.7z" fill="#ff9a1f"/>
<rect x="727" y="603.700" width="20.500" height="11.300" fill="#fbfbfb"/>
<rect x="740.2" y="613.200" width="5.600" height="5.600" rx="0.800" fill="#4a4030"/><path d="M741.5 615l3-1v1.200l-2 .7 2 .7v1.200l-3 1v-1.200l2-.7-2-.7z" fill="#ff9a1f"/>
<rect x="750.2" y="603.700" width="20.500" height="11.300" fill="#fbfbfb"/>
<rect x="763.4000000000001" y="613.200" width="5.600" height="5.600" rx="0.800" fill="#4a4030"/><path d="M764.7 615l3-1v1.200l-2 .7 2 .7v1.200l-3 1v-1.200l2-.7-2-.7z" fill="#ff9a1f"/>
<rect x="773.5" y="603.700" width="20.500" height="11.300" fill="#fbfbfb"/>
<rect x="786.7" y="613.200" width="5.600" height="5.600" rx="0.800" fill="#4a4030"/><path d="M788.0 615l3-1v1.200l-2 .7 2 .7v1.200l-3 1v-1.200l2-.7-2-.7z" fill="#ff9a1f"/>
<path d="M797 604h20.500" stroke="#e8b070" stroke-width="0.600"/>
<rect x="810.200" y="613.200" width="5.600" height="5.600" rx="0.800" fill="#4a4030"/><path d="M811.500 615l3-1v1.200l-2 .7 2 .7v1.200l-3 1v-1.200l2-.7-2-.7z" fill="#ff9a1f"/>
<rect x="820" y="603.700" width="20.500" height="11.300" fill="#fbfbfb"/>
<rect x="833.2" y="613.200" width="5.600" height="5.600" rx="0.800" fill="#4a4030"/><path d="M834.5 615l3-1v1.200l-2 .7 2 .7v1.200l-3 1v-1.200l2-.7-2-.7z" fill="#ff9a1f"/>
<rect x="843" y="603.700" width="20.500" height="11.300" fill="#fbfbfb"/>
<circle cx="859" cy="615.800" r="2.600" fill="#16181c"/><circle cx="859" cy="615.800" r="1" fill="#4a6a9a"/>
<rect x="843" y="603.700" width="3" height="11.300" fill="#2a2e38"/>
<rect x="866" y="603.700" width="20.500" height="11.300" fill="#fbfbfb"/>
<circle cx="882" cy="615.800" r="2.800" fill="#2a7ad8"/><circle cx="882" cy="615.800" r="1.200" fill="#9ac8f0"/>
<rect x="889.500" y="601" width="20.500" height="16.500" fill="#f6f6f6"/><path d="M892 604h15M892 606.500h15M892 609h12M892 611.500h14" stroke="#c8c8cc" stroke-width="0.700"/><rect x="903" y="613.500" width="6.500" height="5" fill="#3a6a9a"/><rect x="904" y="614.500" width="4.500" height="2" fill="#e8e8e8"/>
<circle cx="928" cy="616" r="2.800" fill="#e8a83a"/><path d="M928 613.200a2.800 2.800 0 0 1 2.500 1.500H928z" fill="#db4437"/><circle cx="928" cy="616" r="1.200" fill="#4285f4"/><path d="M925.500 612.500h5v1.500h-5z" fill="#c8402e"/>
<path d="M933.500 603v15" stroke="#b8682a" stroke-width="0.600"/>
<rect x="936" y="603.700" width="20.500" height="10.500" fill="#f4f6f8"/><rect x="936" y="603.700" width="20.500" height="1.500" fill="#5a8ac0"/><circle cx="952" cy="615.500" r="3" fill="#1a78d8"/><circle cx="951" cy="615" r="1.300" fill="#6ad0a0"/>
<path d="M962.500 600.500h15l-1.800 17.500a1.500 1.500 0 0 1-1.500 1h-8.400a1.500 1.500 0 0 1-1.500-1z" fill="#e4e8ec" stroke="#c0c4c8" stroke-width="0.500"/><ellipse cx="970" cy="600.800" rx="7.500" ry="1.800" fill="#f4f6f8" stroke="#b8bcc0" stroke-width="0.500"/><path d="M965 603l1.200 14M968.500 603l.5 14M972 603l-.5 14M975 603l-1.200 14" stroke="#c4c8cc" stroke-width="0.500"/>
<g fill="#14100c"><circle cx="30" cy="622.200" r="1.250"/><circle cx="53.5" cy="622.200" r="1.250"/><circle cx="76" cy="622.200" r="1.250"/><circle cx="100" cy="622.200" r="1.250"/><circle cx="123" cy="622.200" r="1.250"/><circle cx="169" cy="622.200" r="1.250"/><circle cx="192.5" cy="622.200" r="1.250"/><circle cx="239" cy="622.200" r="1.250"/><circle cx="262.5" cy="622.200" r="1.250"/><circle cx="285.5" cy="622.200" r="1.250"/><circle cx="308.7" cy="622.200" r="1.250"/><circle cx="332" cy="622.200" r="1.250"/><circle cx="355" cy="622.200" r="1.250"/><circle cx="377.5" cy="622.200" r="1.250"/><circle cx="401" cy="622.200" r="1.250"/><circle cx="425" cy="622.200" r="1.250"/><circle cx="447.5" cy="622.200" r="1.250"/><circle cx="471" cy="622.200" r="1.250"/><circle cx="494" cy="622.200" r="1.250"/></g>
</svg>
</div>

</div>
</body>
</html>
